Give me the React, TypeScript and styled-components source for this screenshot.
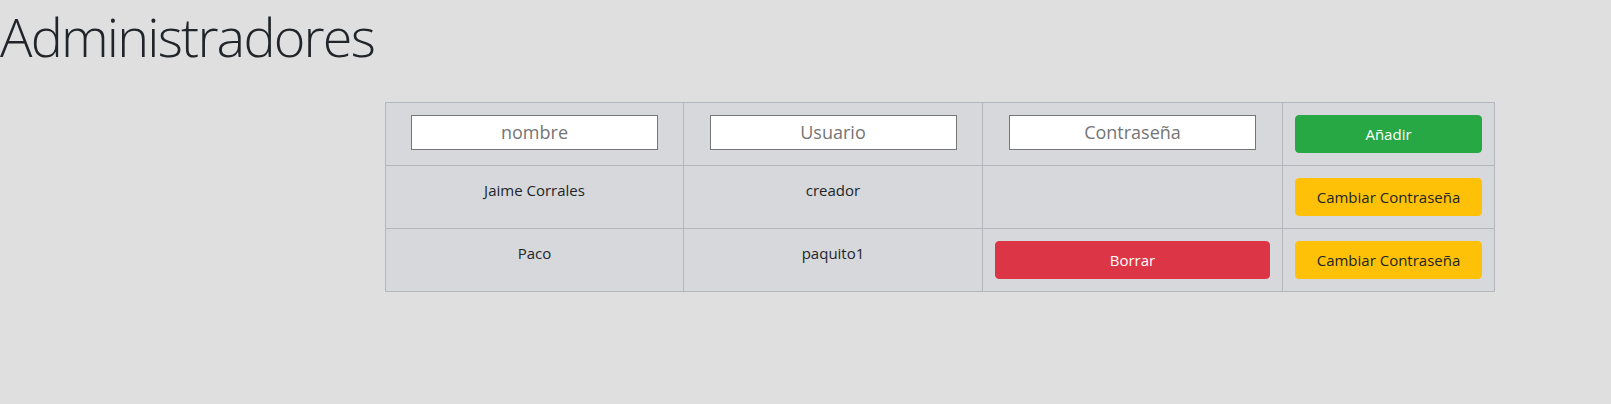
import React from "react";
import styled, { createGlobalStyle } from "styled-components";

const GlobalStyle = createGlobalStyle`
  html, body {
    margin: 0;
    padding: 0;
    background: #dfdfdf;
    color: #212529;
    font-family: "Open Sans", "Noto Sans", "Liberation Sans", sans-serif;
    font-size: 16px;
  }
  * { box-sizing: border-box; }
`;

const Page = styled.div`
  display: flex;
  flex-direction: column;
  padding-bottom: 113px;
`;

const Title = styled.h1`
  margin: 0;
  padding-top: 4px;
  font-size: 54px;
  font-weight: 300;
  line-height: 1.2;
  letter-spacing: -1.8px;
  color: #212529;
`;

const TableWrap = styled.div`
  margin-top: 33px;
  padding-left: 385px;
`;

const Grid = styled.div`
  display: grid;
  grid-template-columns: 298px 299px 300px 212px;
  width: 1110px;
  background: #d6d8db;
  border-left: 1px solid #b3b7bb;
  border-top: 1px solid #b3b7bb;
`;

const Cell = styled.div`
  height: 63px;
  padding: 12px;
  border-right: 1px solid #b3b7bb;
  border-bottom: 1px solid #b3b7bb;
  display: flex;
  flex-direction: column;
  align-items: center;
  text-align: center;
  font-size: 15px;
  line-height: 24px;
`;

const Field = styled.input`
  width: 247px;
  height: 35px;
  border: 1px solid #767676;
  background: #fff;
  font-family: inherit;
  font-size: 18px;
  text-align: center;
  padding: 0 4px;
  color: #212529;
  &::placeholder {
    color: #757575;
  }
`;

const variants = {
  success: { bg: "#28a745", fg: "#fff" },
  warning: { bg: "#ffc107", fg: "#212529" },
  danger: { bg: "#dc3545", fg: "#fff" },
} as const;

const Btn = styled.button<{ $variant: keyof typeof variants }>`
  align-self: stretch;
  height: 38px;
  border: 1px solid ${(p) => variants[p.$variant].bg};
  border-radius: 4px;
  background: ${(p) => variants[p.$variant].bg};
  color: ${(p) => variants[p.$variant].fg};
  font-family: inherit;
  font-size: 15px;
  line-height: 24px;
  padding: 6px 12px;
  cursor: pointer;
`;

const rows = [
  { name: "Jaime Corrales", user: "creador", canDelete: false },
  { name: "Paco", user: "paquito1", canDelete: true },
];

export default function App() {
  return (
    <>
      <GlobalStyle />
      <Page>
        <Title>Administradores</Title>
        <TableWrap>
          <Grid>
            <Cell>
              <Field placeholder="nombre" />
            </Cell>
            <Cell>
              <Field placeholder="Usuario" />
            </Cell>
            <Cell>
              <Field placeholder="Contraseña" type="password" />
            </Cell>
            <Cell>
              <Btn $variant="success">Añadir</Btn>
            </Cell>
            {rows.map((r) => (
              <React.Fragment key={r.user}>
                <Cell>{r.name}</Cell>
                <Cell>{r.user}</Cell>
                <Cell>
                  {r.canDelete && <Btn $variant="danger">Borrar</Btn>}
                </Cell>
                <Cell>
                  <Btn $variant="warning">Cambiar Contraseña</Btn>
                </Cell>
              </React.Fragment>
            ))}
          </Grid>
        </TableWrap>
      </Page>
    </>
  );
}
